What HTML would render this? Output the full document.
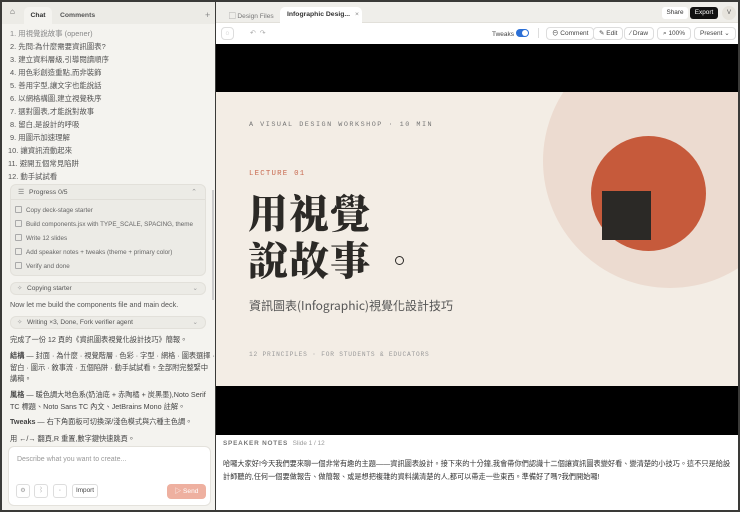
<!DOCTYPE html>
<html><head><meta charset="utf-8"><style>
*{box-sizing:border-box;margin:0;padding:0}
body{width:740px;height:512px;overflow:hidden;background:#3a3a38;font-family:"Liberation Sans","Noto Sans CJK TC",sans-serif;position:relative}
.a{position:absolute}
#left{left:2px;top:2px;width:213px;height:508px;background:#f4f3ef;overflow:hidden}
#right{left:216px;top:2px;width:522px;height:508px;background:#fff;overflow:hidden}
.li{position:absolute;left:8px;font-size:7.4px;color:#555;white-space:nowrap}
.box{position:absolute;left:8px;width:196px;background:#ecebe6;border:1px solid #e2e0da;border-radius:6px}
.cb{position:absolute;left:4px;font-size:6.3px;color:#666;white-space:nowrap}
.cb:before{content:"";display:inline-block;width:5px;height:5px;border:1px solid #aaa;border-radius:1px;margin-right:4px;vertical-align:-1px}
.p{position:absolute;left:8px;font-size:7.2px;color:#444;white-space:nowrap;line-height:11.5px}
.btn{position:absolute;top:25px;height:13px;border:1px solid #ddd;border-radius:4px;font-size:6.5px;color:#444;line-height:11px;padding:0 5px;background:#fff;white-space:nowrap}
.mono{font-family:"Liberation Mono",monospace}
</style></head><body>
<div id="left" class="a">
 <div class="a" style="left:0;top:0;width:213px;height:22px;background:#ecebe6"></div>
 <div class="a" style="left:8px;top:5px;font-size:8px;color:#555">⌂</div>
 <div class="a" style="left:22px;top:5px;width:28px;height:17px;background:#f4f3ef;border-radius:5px 5px 0 0;font-size:6.8px;font-weight:bold;color:#333;text-align:center;line-height:17px">Chat</div>
 <div class="a" style="left:58px;top:10px;font-size:6.8px;font-weight:bold;color:#555">Comments</div>
 <div class="a" style="left:203px;top:8px;font-size:9px;color:#888">+</div>
 <div class="li" style="top:26px;color:#888">1. 用視覺說故事 (opener)</div>
 <div class="li" style="top:39px">2. 先問:為什麼需要資訊圖表?</div>
 <div class="li" style="top:52px">3. 建立資料層級,引導閱讀順序</div>
 <div class="li" style="top:65px">4. 用色彩創造重點,而非裝飾</div>
 <div class="li" style="top:78px">5. 善用字型,讓文字也能說話</div>
 <div class="li" style="top:91px">6. 以網格構圖,建立視覺秩序</div>
 <div class="li" style="top:104px">7. 選對圖表,才能說對故事</div>
 <div class="li" style="top:117px">8. 留白,是設計的呼吸</div>
 <div class="li" style="top:130px">9. 用圖示加速理解</div>
 <div class="li" style="top:143px;left:6px">10. 讓資訊流動起來</div>
 <div class="li" style="top:156px;left:6px">11. 避開五個常見陷阱</div>
 <div class="li" style="top:169px;left:6px">12. 動手試試看</div>
 <div class="box" style="top:182px;height:92px">
  <div class="a" style="left:7px;top:3px;font-size:7px;color:#777">☰</div>
  <div class="a" style="left:18px;top:4px;font-size:6.8px;color:#555">Progress 0/5</div>
  <div class="a" style="right:8px;top:3px;font-size:7px;color:#999">⌃</div>
  <div class="a" style="left:0;top:14px;width:194px;border-top:1px solid #e0ded8"></div>
  <div class="cb" style="top:21px">Copy deck-stage starter</div>
  <div class="cb" style="top:35px">Build components.jsx with TYPE_SCALE, SPACING, theme</div>
  <div class="cb" style="top:49px">Write 12 slides</div>
  <div class="cb" style="top:63px">Add speaker notes + tweaks (theme + primary color)</div>
  <div class="cb" style="top:77px">Verify and done</div>
 </div>
 <div class="box" style="top:280px;height:13px;font-size:6.6px;color:#555;line-height:12px;padding-left:16px">Copying starter<span class="a" style="left:6px;color:#999">✧</span><span class="a" style="right:7px;color:#999">⌄</span></div>
 <div class="p" style="top:297px;color:#555">Now let me build the components file and main deck.</div>
 <div class="box" style="top:314px;height:13px;font-size:6.6px;color:#555;line-height:12px;padding-left:16px">Writing ×3, Done, Fork verifier agent<span class="a" style="left:6px;color:#999">✧</span><span class="a" style="right:7px;color:#999">⌄</span></div>
 <div class="p" style="top:332px">完成了一份 12 頁的《資訊圖表視覺化設計技巧》簡報。</div>
 <div class="p" style="top:348px"><b>結構</b> — 封面 · 為什麼 · 視覺階層 · 色彩 · 字型 · 網格 · 圖表選擇 ·<br>留白 · 圖示 · 敘事流 · 五個陷阱 · 動手試試看。全部附完整緊中<br>講稿。</div>
 <div class="p" style="top:387px"><b>風格</b> — 暖色調大地色系(奶油底 + 赤陶橘 + 炭黑墨),Noto Serif<br>TC 標題、Noto Sans TC 內文、JetBrains Mono 註解。</div>
 <div class="p" style="top:414px"><b>Tweaks</b> — 右下角面板可切換深/淺色模式與六種主色調。</div>
 <div class="p" style="top:431px">用 ←/→ 翻頁,R 重置,數字鍵快速跳頁。</div>
 <div class="a" style="left:6px;top:444px;width:203px;height:60px;background:#fff;border:1px solid #e4e2dc;border-radius:6px">
  <div class="a" style="left:8px;top:9px;font-size:7px;color:#999">Describe what you want to create...</div>
  <div class="a" style="left:7px;top:37px;width:14px;height:14px;border:1px solid #ddd;border-radius:3px;font-size:6px;color:#999;text-align:center;line-height:12px">⚙</div>
  <div class="a" style="left:25px;top:37px;width:14px;height:14px;border:1px solid #ddd;border-radius:3px;font-size:6px;color:#999;text-align:center;line-height:12px">⌇</div>
  <div class="a" style="left:44px;top:37px;width:14px;height:14px;border:1px solid #ddd;border-radius:3px;font-size:6px;color:#999;text-align:center;line-height:12px">◦</div>
  <div class="a" style="left:63px;top:37px;width:26px;height:14px;border:1px solid #ddd;border-radius:3px;font-size:6.4px;color:#444;text-align:center;line-height:12px">Import</div>
  <div class="a" style="left:158px;top:37px;width:39px;height:15px;background:#eeb0a0;border-radius:4px;font-size:6.6px;color:#fff;text-align:center;line-height:15px">▷ Send</div>
 </div>
</div>
<div class="a" style="left:212px;top:190px;width:2px;height:110px;background:#ccc"></div>
<div id="right" class="a">
 <div class="a" style="left:0;top:0;width:522px;height:21px;background:#efeeea;border-bottom:1px solid #e2e0da"></div>
 <div class="a" style="left:13px;top:8px;font-size:6.6px;color:#777">▢ Design Files</div>
 <div class="a" style="left:64px;top:5px;width:82px;height:17px;background:#fff;border-radius:5px 5px 0 0;font-size:6.8px;font-weight:bold;color:#333;line-height:16px;padding-left:7px">Infographic Desig... <span style="color:#888;font-weight:normal;margin-left:3px">×</span></div>
 <div class="a" style="left:446px;top:5px;width:26px;height:12px;background:#fff;border-radius:3px;font-size:6.4px;color:#333;text-align:center;line-height:12px">Share</div>
 <div class="a" style="left:474px;top:5px;width:28px;height:12px;background:#111;border-radius:3px;font-size:6.4px;color:#fff;text-align:center;line-height:12px">Export</div>
 <div class="a" style="left:506px;top:4px;width:14px;height:14px;background:#e6e3dc;border-radius:50%;font-size:6px;color:#555;text-align:center;line-height:14px">V</div>
 <div class="btn" style="left:5px;width:13px;padding:0;text-align:center;color:#888">◌</div>
 <div class="a" style="left:34px;top:27px;font-size:7px;color:#aaa">↶ &nbsp;↷</div>
 <div class="a" style="left:276px;top:29px;font-size:6.5px;color:#444">Tweaks</div>
 <div class="a" style="left:300px;top:27px;width:13px;height:8px;background:#2b6fd6;border-radius:4px"><div class="a" style="right:1px;top:1px;width:6px;height:6px;background:#fff;border-radius:50%"></div></div>
 <div class="a" style="left:322px;top:26px;width:1px;height:10px;background:#ddd"></div>
 <div class="btn" style="left:330px">⊖ Comment</div>
 <div class="btn" style="left:377px">✎ Edit</div>
 <div class="btn" style="left:408px">⁄ Draw</div>
 <div class="btn" style="left:441px">⌕ 100%</div>
 <div class="btn" style="left:478px">Present ⌄</div>
 <div class="a" style="left:0;top:42px;width:522px;height:391px;background:#000"></div>
 <div class="a" style="left:0;top:90px;width:522px;height:294px;background:#f3ede5;overflow:hidden">
  <div class="a" style="left:327px;top:-58px;width:254px;height:254px;border-radius:50%;background:#ecdbd0"></div>
  <div class="a" style="left:375px;top:44px;width:115px;height:115px;border-radius:50%;background:#c65a3b"></div>
  <div class="a" style="left:386px;top:99px;width:49px;height:49px;background:#2b2926"></div>
  <div class="a mono" style="left:33px;top:29px;font-size:6.8px;letter-spacing:1.5px;color:#777">A VISUAL DESIGN WORKSHOP · 10 MIN</div>
  <div class="a mono" style="left:33px;top:78px;font-size:7.4px;letter-spacing:1.2px;color:#c86a50">LECTURE 01</div>
  <div class="a" style="left:32px;top:96px;font-family:'Noto Serif CJK TC','Noto Serif CJK SC',serif;font-weight:900;font-size:40px;line-height:47px;color:#2b2926;letter-spacing:1px">用視覺<br>說故事</div>
  <div class="a" style="left:179px;top:164px;width:9px;height:9px;border:1.8px solid #2b2926;border-radius:50%"></div>
  <div class="a" style="left:33px;top:205px;font-size:12px;color:#555;font-family:'Noto Sans CJK TC',sans-serif">資訊圖表(Infographic)視覺化設計技巧</div>
  <div class="a mono" style="left:33px;top:259px;font-size:6.2px;letter-spacing:0.8px;color:#999">12 PRINCIPLES · FOR STUDENTS &amp; EDUCATORS</div>
 </div>
 <div class="a" style="left:7px;top:438px;font-size:6.4px;letter-spacing:.8px;color:#777;font-weight:bold">SPEAKER NOTES <span style="font-weight:normal;letter-spacing:0;color:#999;margin-left:2px">Slide 1 / 12</span></div>
 <div class="a" style="left:7px;top:455px;width:510px;font-size:7.2px;line-height:13px;color:#333">哈囉大家好!今天我們要來聊一個非常有趣的主題——資訊圖表設計。接下來的十分鐘,我會帶你們認識十二個讓資訊圖表變好看、變清楚的小技巧。這不只是給設計師聽的,任何一個要做報告、做簡報、或是想把複雜的資料講清楚的人,都可以帶走一些東西。準備好了嗎?我們開始囉!</div>
</div>
</body></html>
